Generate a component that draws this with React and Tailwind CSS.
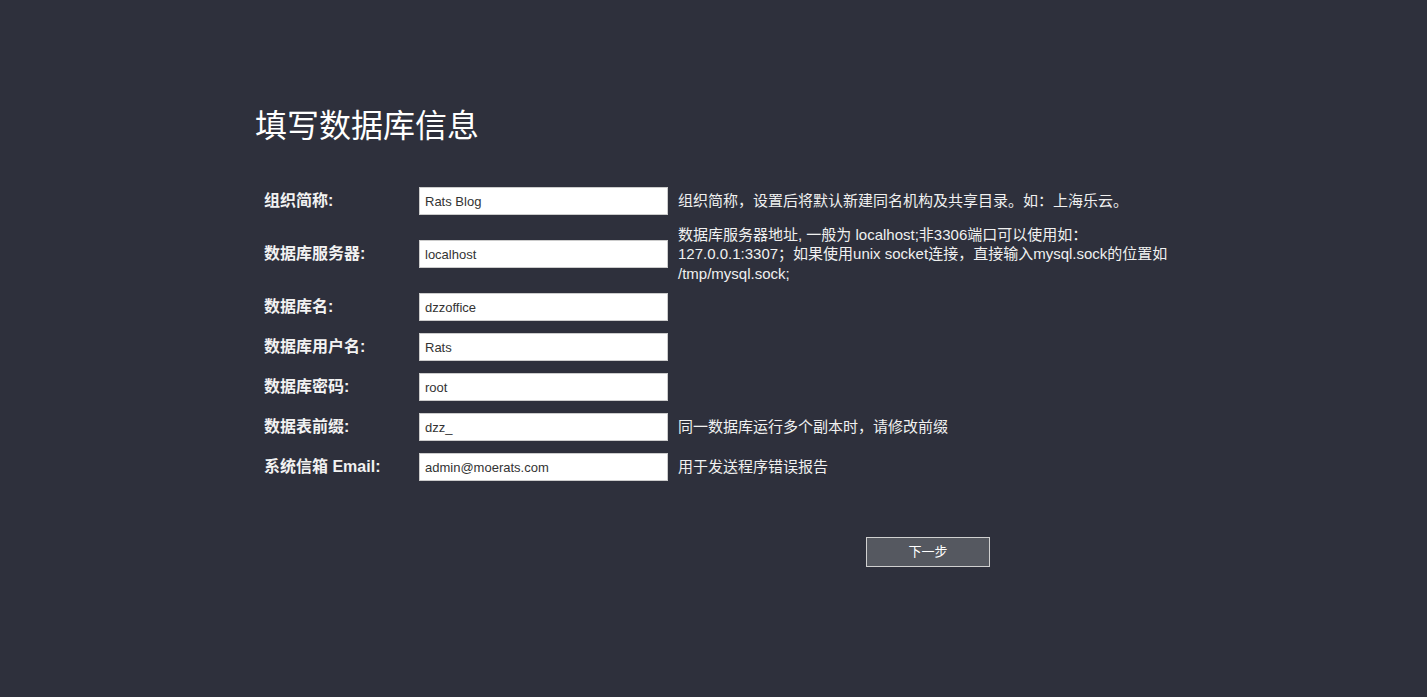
import React from 'react';

const rows = [
  { label: '组织简称:', value: 'Rats Blog', desc: ['组织简称，设置后将默认新建同名机构及共享目录。如：上海乐云。'] },
  {
    label: '数据库服务器:',
    value: 'localhost',
    desc: [
      '数据库服务器地址, 一般为 localhost;非3306端口可以使用如：',
      '127.0.0.1:3307；如果使用unix socket连接，直接输入mysql.sock的位置如',
      '/tmp/mysql.sock;',
    ],
    tall: true,
  },
  { label: '数据库名:', value: 'dzzoffice' },
  { label: '数据库用户名:', value: 'Rats' },
  { label: '数据库密码:', value: 'root' },
  { label: '数据表前缀:', value: 'dzz_', desc: ['同一数据库运行多个副本时，请修改前缀'] },
  { label: '系统信箱 Email:', value: 'admin@moerats.com', desc: ['用于发送程序错误报告'] },
];

const font = { fontFamily: '"Liberation Sans", Arial, "Noto Sans CJK SC", sans-serif' };

export default function App() {
  return (
    <div className="min-h-[697px] w-full bg-[#2e303c] text-white" style={font}>
      <div className="pl-[255px] pt-[104px]">
        <h1 className="text-[32px] leading-[44px] font-normal text-white">填写数据库信息</h1>

        <div className="mt-[33px]">
          {rows.map((r) => (
            <div key={r.label} className={`flex items-center ${r.tall ? 'h-[66px]' : 'h-[40px]'}`}>
              <div className="w-[164px] pl-[9px] text-[16px] font-bold text-[#f2f2f2]">{r.label}</div>
              <input
                readOnly
                value={r.value}
                className="w-[249px] h-[28px] shrink-0 bg-white border border-[#ccc] px-[5px] text-[13px] text-[#333] outline-none"
              />
              {r.desc && (
                <div className="ml-[10px] whitespace-nowrap text-[15px] leading-[19.5px] text-[#f0f0f0]">
                  {r.desc.map((line) => (
                    <div key={line}>{line}</div>
                  ))}
                </div>
              )}
            </div>
          ))}
        </div>

        <div className="mt-[50px] pl-[611px]">
          <button className="w-[124px] h-[30px] bg-[#555860] border border-[#d0d0d0] text-[13px] text-white">
            下一步
          </button>
        </div>
      </div>
    </div>
  );
}
